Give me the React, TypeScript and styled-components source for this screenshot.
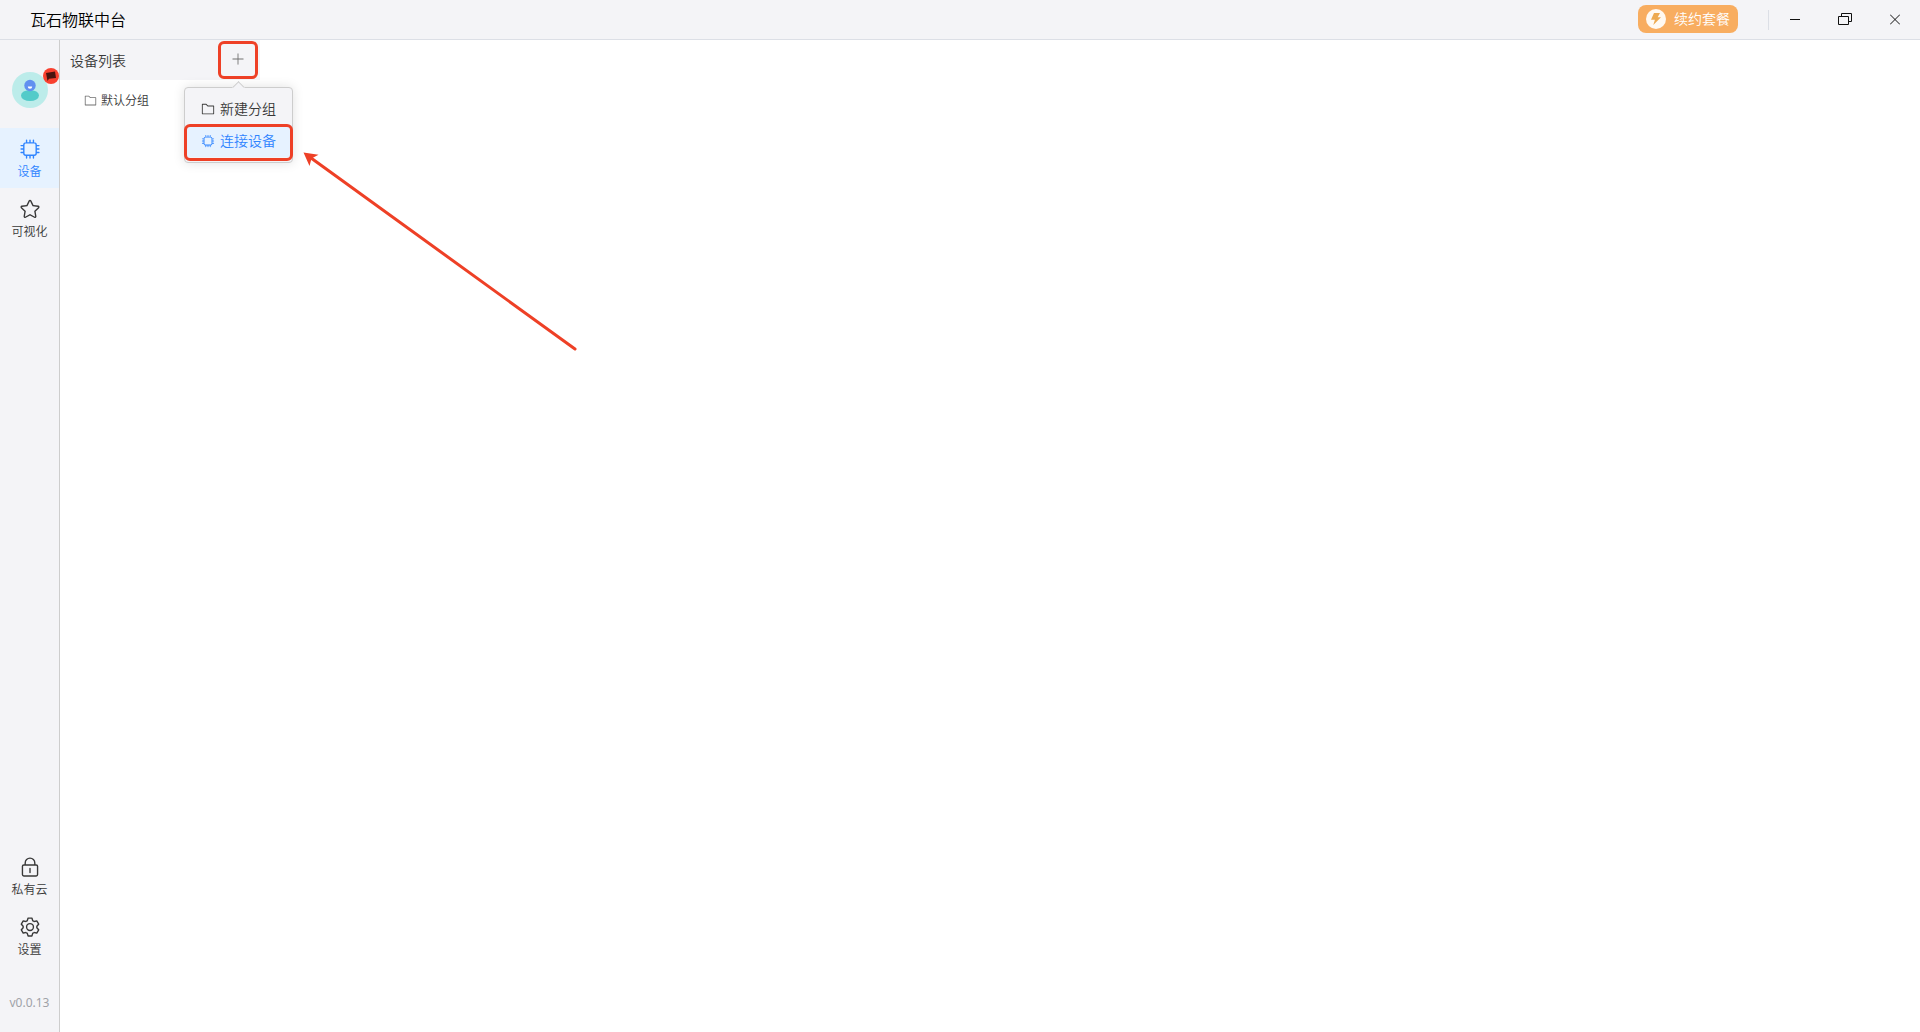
import React from "react";
import styled, { createGlobalStyle } from "styled-components";

const color = {
  chrome: "#f4f4f7",
  line: "#dcdfe6",
  edge: "#cdcdcd",
  text: "#383838",
  icon: "#707070",
  muted: "#a0a2a8",
  primary: "#2f84ff",
  primarySoft: "#e6f2ff",
  accent: "#f8ad60",
  mark: "#ee4026",
};

const GlobalStyle = createGlobalStyle`
  *, *::before, *::after { box-sizing: border-box; }
  body {
    margin: 0;
    background: #fff;
    color: ${color.text};
    font: 350 14px/20px "Noto Sans", "Noto Sans CJK SC", sans-serif;
  }
  button {
    margin: 0;
    padding: 0;
    border: 0;
    background: none;
    color: inherit;
    font: inherit;
    cursor: pointer;
  }
  ul { margin: 0; padding: 0; list-style: none; }
`;

const paths = {
  cpu: "M320 256a64 64 0 0 0-64 64v384a64 64 0 0 0 64 64h384a64 64 0 0 0 64-64V320a64 64 0 0 0-64-64zm0-64h384a128 128 0 0 1 128 128v384a128 128 0 0 1-128 128H320a128 128 0 0 1-128-128V320a128 128 0 0 1 128-128M512 64a32 32 0 0 1 32 32v128h-64V96a32 32 0 0 1 32-32m160 0a32 32 0 0 1 32 32v128h-64V96a32 32 0 0 1 32-32m-320 0a32 32 0 0 1 32 32v128h-64V96a32 32 0 0 1 32-32m160 896a32 32 0 0 1-32-32V800h64v128a32 32 0 0 1-32 32m160 0a32 32 0 0 1-32-32V800h64v128a32 32 0 0 1-32 32m-320 0a32 32 0 0 1-32-32V800h64v128a32 32 0 0 1-32 32M64 512a32 32 0 0 1 32-32h128v64H96a32 32 0 0 1-32-32m0-160a32 32 0 0 1 32-32h128v64H96a32 32 0 0 1-32-32m0 320a32 32 0 0 1 32-32h128v64H96a32 32 0 0 1-32-32m896-160a32 32 0 0 1-32 32H800v-64h128a32 32 0 0 1 32 32m0-160a32 32 0 0 1-32 32H800v-64h128a32 32 0 0 1 32 32m0 320a32 32 0 0 1-32 32H800v-64h128a32 32 0 0 1 32 32",
  star: "m512 747.84 228.16 119.936a6.4 6.4 0 0 0 9.28-6.72l-43.52-254.08 184.512-179.904a6.4 6.4 0 0 0-3.52-10.88l-255.104-37.12L517.76 147.904a6.4 6.4 0 0 0-11.52 0L392.192 379.072l-255.104 37.12a6.4 6.4 0 0 0-3.52 10.88L318.08 606.976l-43.584 254.08a6.4 6.4 0 0 0 9.28 6.72zM313.6 924.48a70.4 70.4 0 0 1-102.144-74.24l37.888-220.928L88.96 472.96A70.4 70.4 0 0 1 128 352.896l221.76-32.256 99.2-200.96a70.4 70.4 0 0 1 126.208 0l99.2 200.96 221.824 32.256a70.4 70.4 0 0 1 39.04 120.064L774.72 629.376l37.888 220.928a70.4 70.4 0 0 1-102.144 74.24L512 820.096l-198.4 104.32z",
  lock: "M224 448a32 32 0 0 0-32 32v384a32 32 0 0 0 32 32h576a32 32 0 0 0 32-32V480a32 32 0 0 0-32-32zm0-64h576a96 96 0 0 1 96 96v384a96 96 0 0 1-96 96H224a96 96 0 0 1-96-96V480a96 96 0 0 1 96-96M512 544a32 32 0 0 1 32 32v192a32 32 0 1 1-64 0V576a32 32 0 0 1 32-32m192-160v-64a192 192 0 1 0-384 0v64zM512 64a256 256 0 0 1 256 256v128H256V320A256 256 0 0 1 512 64",
  setting:
    "M600.704 64a32 32 0 0 1 30.464 22.208l35.2 109.376c14.784 7.232 28.928 15.36 42.432 24.512l112.384-24.192a32 32 0 0 1 34.432 15.36L944.32 364.8a32 32 0 0 1-4.032 37.504l-77.12 85.12a357.12 357.12 0 0 1 0 49.024l77.12 85.248a32 32 0 0 1 4.032 37.504l-88.704 153.6a32 32 0 0 1-34.432 15.296L708.8 803.904c-13.44 9.088-27.648 17.28-42.368 24.512l-35.264 109.376A32 32 0 0 1 600.704 960H423.296a32 32 0 0 1-30.464-22.208L357.696 828.48a351.616 351.616 0 0 1-42.56-24.64l-112.32 24.256a32 32 0 0 1-34.432-15.36L79.68 659.2a32 32 0 0 1 4.032-37.504l77.12-85.248a357.12 357.12 0 0 1 0-48.896l-77.12-85.248A32 32 0 0 1 79.68 364.8l88.704-153.6a32 32 0 0 1 34.432-15.296l112.32 24.256c13.568-9.152 27.776-17.408 42.56-24.64l35.2-109.312A32 32 0 0 1 423.232 64H600.64zm-23.424 64H446.72l-36.352 113.088-24.512 11.968a294.113 294.113 0 0 0-34.816 20.096l-22.656 15.36-116.224-25.088-65.28 113.152 79.68 88.192-1.92 27.136a293.12 293.12 0 0 0 0 40.192l1.92 27.136-79.808 88.192 65.344 113.152 116.224-25.024 22.656 15.296a294.113 294.113 0 0 0 34.816 20.096l24.512 11.968L446.72 896h130.688l36.48-113.152 24.448-11.904a288.282 288.282 0 0 0 34.752-20.096l22.592-15.296 116.288 25.024 65.28-113.152-79.744-88.192 1.92-27.136a293.12 293.12 0 0 0 0-40.256l-1.92-27.136 79.808-88.128-65.344-113.152-116.288 24.96-22.592-15.232a287.616 287.616 0 0 0-34.752-20.096l-24.448-11.904L577.344 128zM512 320a192 192 0 1 1 0 384 192 192 0 0 1 0-384m0 64a128 128 0 1 0 0 256 128 128 0 0 0 0-256",
  folder:
    "M128 192v640h768V320H485.76L357.504 192zm-32-64h287.872l128.384 128H928a32 32 0 0 1 32 32v576a32 32 0 0 1-32 32H96a32 32 0 0 1-32-32V160a32 32 0 0 1 32-32",
  plus: "M480 480V128a32 32 0 0 1 64 0v352h352a32 32 0 1 1 0 64H544v352a32 32 0 1 1-64 0V544H128a32 32 0 0 1 0-64z",
};

const Svg = styled.svg<{ $size: number }>`
  display: block;
  flex: none;
  width: ${(p) => p.$size}px;
  height: ${(p) => p.$size}px;
  fill: currentColor;
`;

function Icon({ name, size }: { name: keyof typeof paths; size: number }) {
  return (
    <Svg $size={size} viewBox="0 0 1024 1024" aria-hidden="true">
      <path d={paths[name]} />
    </Svg>
  );
}

const Page = styled.div`
  position: relative;
  display: flex;
  flex-direction: column;
  min-height: 100vh;
`;

const TitleBar = styled.header`
  display: flex;
  align-items: center;
  height: 40px;
  padding-left: 30px;
  border-bottom: 1px solid ${color.line};
  background: ${color.chrome};
`;

const Title = styled.h1`
  flex: 1;
  margin: 0;
  color: #000;
  font-size: 16px;
  font-weight: 350;
  line-height: 22px;
`;

const RenewButton = styled.button`
  display: flex;
  align-items: center;
  gap: 8px;
  height: 28px;
  margin-bottom: 1px;
  padding: 0 8px;
  border-radius: 8px;
  background: ${color.accent};
  color: #fff;
`;

const Divider = styled.span`
  width: 1px;
  height: 20px;
  margin: 0 1px 0 30px;
  background: ${color.line};
`;

const WindowButton = styled.button`
  display: grid;
  place-items: center;
  width: 50px;
  height: 39px;
  color: #101010;

  svg {
    fill: none;
    stroke: currentColor;
  }
`;

const Body = styled.div`
  display: flex;
  flex: 1;
`;

const Sidebar = styled.nav`
  display: flex;
  flex-direction: column;
  width: 60px;
  border-right: 1px solid ${color.edge};
  background: ${color.chrome};
`;

const Account = styled.button`
  position: relative;
  align-self: center;
  width: 36px;
  height: 36px;
  margin: 32px 0 20px;

  svg { display: block; }
`;

const Flag = styled.svg`
  position: absolute;
  top: -4px;
  right: -11px;
`;

const NavItem = styled.button<{ $active?: boolean }>`
  display: flex;
  flex-direction: column;
  align-items: center;
  gap: 2px;
  height: 60px;
  padding-top: 10px;
  background: ${(p) => (p.$active ? color.primarySoft : "transparent")};
  color: ${(p) => (p.$active ? color.primary : color.text)};
  font-size: 12px;
  line-height: 20px;
`;

const NavFoot = styled.div`
  display: flex;
  flex-direction: column;
  margin-top: auto;
`;

const Version = styled.div`
  padding: 27px 0 19px;
  color: ${color.muted};
  font-size: 12px;
  font-weight: 400;
  text-align: center;
`;

const Panel = styled.aside`
  width: 200px;
`;

const PanelHead = styled.div`
  display: flex;
  align-items: center;
  justify-content: space-between;
  height: 40px;
  padding: 0 2px 0 10px;
  background: ${color.chrome};
`;

const PanelTitle = styled.h2`
  margin: 0;
  padding-top: 2px;
  font-size: 14px;
  font-weight: 350;
  line-height: 22px;
`;

const AddWrap = styled.div`
  position: relative;
`;

const AddButton = styled.button`
  display: grid;
  place-items: center;
  width: 40px;
  height: 38px;
  padding-bottom: 2px;
  border: 3px solid ${color.mark};
  border-radius: 6px;
  color: ${color.icon};
`;

const Menu = styled.ul`
  position: absolute;
  top: 46px;
  left: -34px;
  width: 109px;
  padding: 5px 0;
  border: 1px solid ${color.edge};
  border-radius: 4px;
  background: ${color.chrome};
  box-shadow: 0 0 12px rgba(0, 0, 0, 0.12);

  &::before {
    content: "";
    position: absolute;
    top: -5px;
    left: 49px;
    width: 9px;
    height: 9px;
    border: 1px solid ${color.edge};
    border-right-color: transparent;
    border-bottom-color: transparent;
    background: ${color.chrome};
    transform: rotate(45deg);
  }
`;

const MenuItem = styled.button<{ $active?: boolean }>`
  position: relative;
  display: flex;
  align-items: center;
  gap: 5px;
  width: 100%;
  height: 32px;
  padding-left: 16px;
  background: ${(p) => (p.$active ? color.primarySoft : "transparent")};
  color: ${(p) => (p.$active ? color.primary : color.text)};
`;

const ItemMark = styled.span`
  position: absolute;
  inset: -1px -1px -4px;
  border: 3px solid ${color.mark};
  border-radius: 6px;
`;

const Group = styled.button`
  display: flex;
  align-items: center;
  gap: 4px;
  width: 100%;
  height: 42px;
  padding-left: 24px;
  font-size: 12px;

  svg {
    margin-bottom: 2px;
    color: ${color.icon};
  }
`;

const Content = styled.main`
  flex: 1;
`;

const Pointer = styled.svg`
  position: absolute;
  top: 150px;
  left: 300px;
  pointer-events: none;
`;

export default function App() {
  return (
    <Page>
      <GlobalStyle />
      <TitleBar>
        <Title>瓦石物联中台</Title>
        <RenewButton type="button">
          <svg width="20" height="20" viewBox="0 0 20 20" aria-hidden="true">
            <circle cx="10" cy="10" r="10" fill="#fff9f1" />
            <path d="M8 4h6l-2.300 4.200H15L7.300 16l1.600-5.200H5z" fill="#eda94f" />
          </svg>
          续约套餐
        </RenewButton>
        <Divider />
        <WindowButton type="button" aria-label="最小化">
          <svg width="10" height="11" viewBox="0 0 10 11">
            <path d="M0 5.500h10" />
          </svg>
        </WindowButton>
        <WindowButton type="button" aria-label="还原">
          <svg width="14" height="13" viewBox="0 0 14 13">
            <path d="M.5 3.500h10v8H.5zM3.500 3.500v-3h10v8h-3" />
          </svg>
        </WindowButton>
        <WindowButton type="button" aria-label="关闭">
          <svg width="10" height="11" viewBox="0 0 10 11">
            <path d="M0 .5l10 10M10 .5l-10 10" />
          </svg>
        </WindowButton>
      </TitleBar>
      <Body>
        <Sidebar>
          <Account type="button" aria-label="账户">
            <svg width="36" height="36" viewBox="0 0 36 36">
              <circle cx="18" cy="18" r="18" fill="#bcecea" />
              <ellipse cx="18" cy="23.500" rx="9" ry="5.500" fill="#53cbc9" />
              <circle cx="18" cy="13.500" r="5.700" fill="#6190f0" />
              <path d="M15.800 14.500h4.400a2.200 2.200 0 0 1-4.400 0z" fill="#fff" />
            </svg>
            <Flag width="16" height="16" viewBox="0 0 16 16">
              <circle cx="8" cy="8" r="8" fill="#f8402f" />
              <path d="M3 5l9-1.500 1 6.500-7 .8-1.500 2.200z" fill="#48130f" />
            </Flag>
          </Account>
          <NavItem type="button" $active>
            <Icon name="cpu" size={22} />
            设备
          </NavItem>
          <NavItem type="button">
            <Icon name="star" size={22} />
            可视化
          </NavItem>
          <NavFoot>
            <NavItem type="button">
              <Icon name="lock" size={22} />
              私有云
            </NavItem>
            <NavItem type="button">
              <Icon name="setting" size={22} />
              设置
            </NavItem>
            <Version>v0.0.13</Version>
          </NavFoot>
        </Sidebar>
        <Panel>
          <PanelHead>
            <PanelTitle>设备列表</PanelTitle>
            <AddWrap>
              <AddButton type="button" aria-label="添加">
                <Icon name="plus" size={14} />
              </AddButton>
              <Menu>
                <li>
                  <MenuItem type="button">
                    <Icon name="folder" size={14} />
                    新建分组
                  </MenuItem>
                </li>
                <li>
                  <MenuItem type="button" $active>
                    <Icon name="cpu" size={14} />
                    连接设备
                    <ItemMark />
                  </MenuItem>
                </li>
              </Menu>
            </AddWrap>
          </PanelHead>
          <Group type="button">
            <Icon name="folder" size={13} />
            默认分组
          </Group>
        </Panel>
        <Content />
      </Body>
      <Pointer width="280" height="204" viewBox="0 0 280 204" aria-hidden="true">
        <path
          d="M10 7.300L275 199"
          fill="none"
          stroke={color.mark}
          strokeWidth="3"
          strokeLinecap="round"
        />
        <path d="M3.500 2.500L18.500 4.800 11.500 8.500l-2 7.500z" fill={color.mark} />
      </Pointer>
    </Page>
  );
}
